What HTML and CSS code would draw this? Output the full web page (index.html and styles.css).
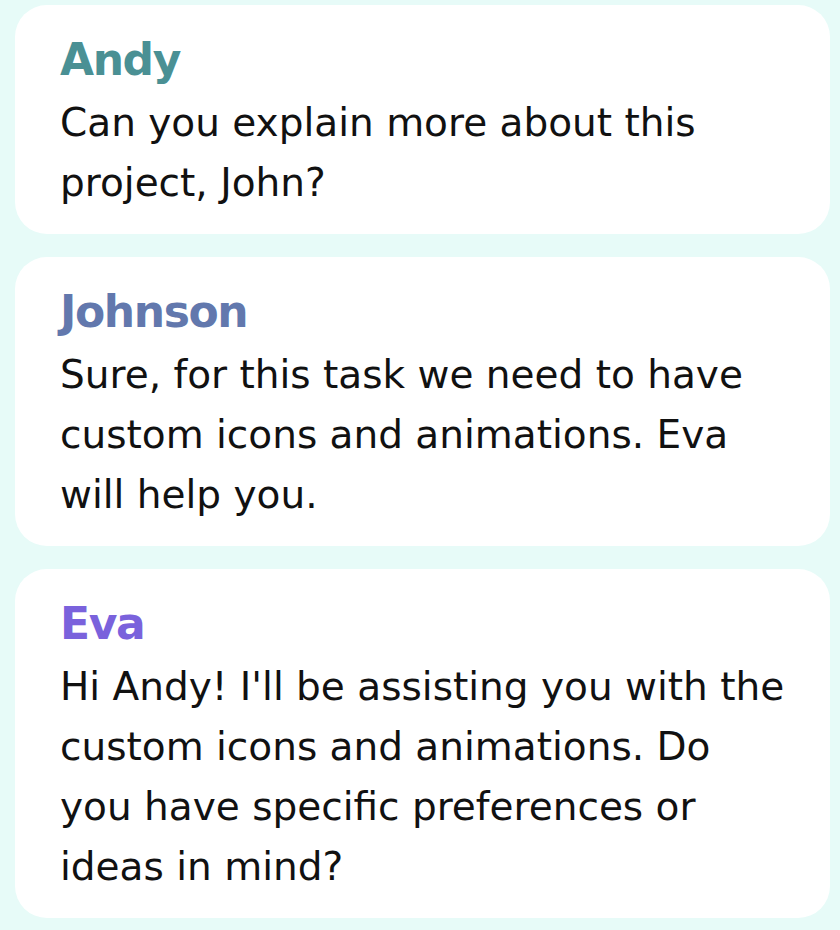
FILE: index.html
```html
<!DOCTYPE html>
<html lang="en">
<head>
<meta charset="utf-8">
<title>Chat</title>
<link rel="stylesheet" href="styles.css">
</head>
<body>
<div class="thread">
  <div class="msg">
    <div class="name name-andy">Andy</div>
    <p class="text">Can you explain more about this project, John?</p>
  </div>
  <div class="msg">
    <div class="name name-johnson">Johnson</div>
    <p class="text">Sure, for this task we need to have custom icons and animations. Eva will help you.</p>
  </div>
  <div class="msg">
    <div class="name name-eva">Eva</div>
    <p class="text">Hi Andy! I'll be assisting you with the custom icons and animations. Do you have specific preferences or ideas in mind?</p>
  </div>
</div>
</body>
</html>
```
FILE: styles.css
```css
html, body {
  margin: 0;
  padding: 0;
  background: #e7fbf8;
}
body {
  font-family: "DejaVu Sans", sans-serif;
  color: #111;
}
.thread {
  display: flex;
  flex-direction: column;
  gap: 23px;
  padding: 5px 10px 15px 15px;
}
.msg {
  background: #fff;
  border-radius: 32px;
  padding: 22px 42px 21px 45px;
}
.name {
  font-size: 44px;
  font-weight: 700;
  line-height: 66px;
  letter-spacing: -1.4px;
}
.name-andy { color: #4a9094; }
.name-johnson { color: #6278ad; }
.name-eva { color: #7a62dc; }
.text {
  margin: 0;
  font-size: 39px;
  line-height: 60px;
}
```
